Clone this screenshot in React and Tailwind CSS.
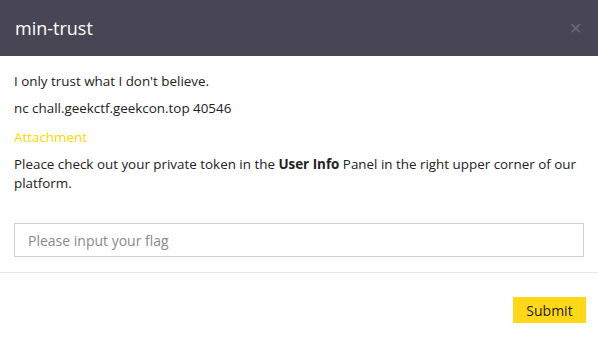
import React, { useState } from 'react';

const App = () => {
    const [flag, setFlag] = useState('');

    return (
        <div className="flex w-[598px] h-[337px] bg-white overflow-hidden" style={{ fontFamily: '"Open Sans", "Noto Sans", sans-serif' }}>
            {/* backdrop sliver */}
            <div className="w-[2px] flex flex-col">
                <div className="h-[130px] bg-[#0d0c1c]"></div>
                <div className="flex-1 bg-[#1e1e22]"></div>
            </div>

            <div className="flex-1 flex flex-col">
                {/* Header */}
                <div className="h-[56px] bg-[#484655] flex items-center justify-between pl-[15px] pr-[16px]">
                    <h2 className="text-[18px] text-white">min-trust</h2>
                    <button className="text-[#6a6878] text-[16px] leading-none">✕</button>
                </div>

                {/* Body */}
                <div className="px-[14px] pt-[15px] text-[13.4px] text-[#222]">
                    <p className="leading-[20px]">I only trust what I don't believe.</p>
                    <p className="leading-[20px] mt-[7px]">nc chall.geekctf.geekcon.top 40546</p>
                    <p className="leading-[20px] mt-[9px]">
                        <a className="text-[#ffd700] cursor-pointer">Attachment</a>
                    </p>
                    <p className="leading-[19px] mt-[8px]">
                        Pleace check out your private token in the <b>User Info</b> Panel in the right upper corner of our platform.
                    </p>

                    <input
                        type="text"
                        placeholder="Please input your flag"
                        value={flag}
                        onChange={(e) => setFlag(e.target.value)}
                        className="mt-[30px] w-[570px] h-[34px] px-[13px] border border-[#cfcfcf] text-[14px] placeholder-[#8a8a8a] focus:outline-none"
                    />
                </div>

                <div className="mt-[15px] border-t border-[#e5e5e5] flex justify-end pt-[24px] pr-[12px]">
                    <button className="w-[73px] h-[26px] bg-[#ffd81a] text-[14px] text-[#222]">Submit</button>
                </div>
            </div>
        </div>
    );
};

export default App;
